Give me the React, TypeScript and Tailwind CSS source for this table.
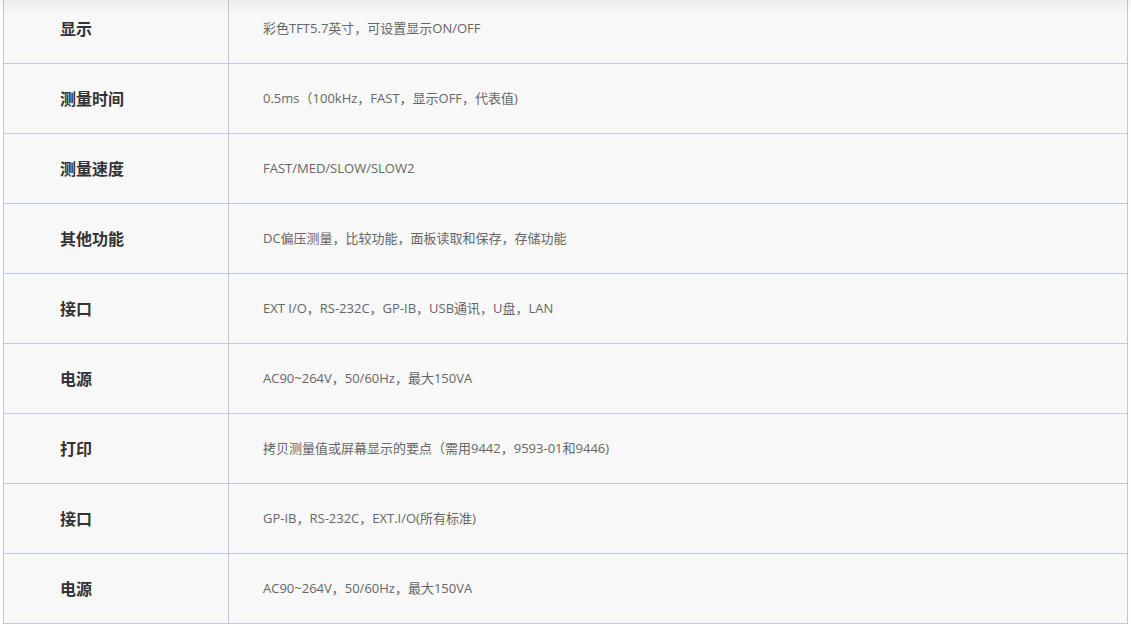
const rows: [string, string][] = [
  ['显示', '彩色TFT5.7英寸，可设置显示ON/OFF'],
  ['测量时间', '0.5ms（100kHz，FAST，显示OFF，代表值)'],
  ['测量速度', 'FAST/MED/SLOW/SLOW2'],
  ['其他功能', 'DC偏压测量，比较功能，面板读取和保存，存储功能'],
  ['接口', 'EXT I/O，RS-232C，GP-IB，USB通讯，U盘，LAN'],
  ['电源', 'AC90~264V，50/60Hz，最大150VA'],
  ['打印', '拷贝测量值或屏幕显示的要点（需用9442，9593-01和9446)'],
  ['接口', 'GP-IB，RS-232C，EXT.I/O(所有标准)'],
  ['电源', 'AC90~264V，50/60Hz，最大150VA'],
];

export default function App() {
  return (
    <div className="relative h-[626px] w-[1131px] overflow-hidden bg-white font-['Open_Sans','Noto_Sans_CJK_SC',sans-serif]">
      <div className="-mt-[7px] ml-[3px] w-[1125px] border-x border-t border-[#bfcae0] bg-[#f8f8f8]">
        {rows.map(([label, value], i) => (
          <div key={i} className="flex h-[70px] border-b border-[#bfcae0]">
            <div className="flex w-[225px] shrink-0 items-center border-r border-[#bfcae0] pl-[56px] text-[16px] font-bold text-[#333]">
              {label}
            </div>
            <div className="flex flex-1 items-center pl-[34px] text-[13px] text-[#666]">
              {value}
            </div>
          </div>
        ))}
      </div>
      <div className="pointer-events-none absolute inset-x-0 top-0 h-[14px] bg-gradient-to-b from-black/[0.05] to-transparent" />
    </div>
  );
}
